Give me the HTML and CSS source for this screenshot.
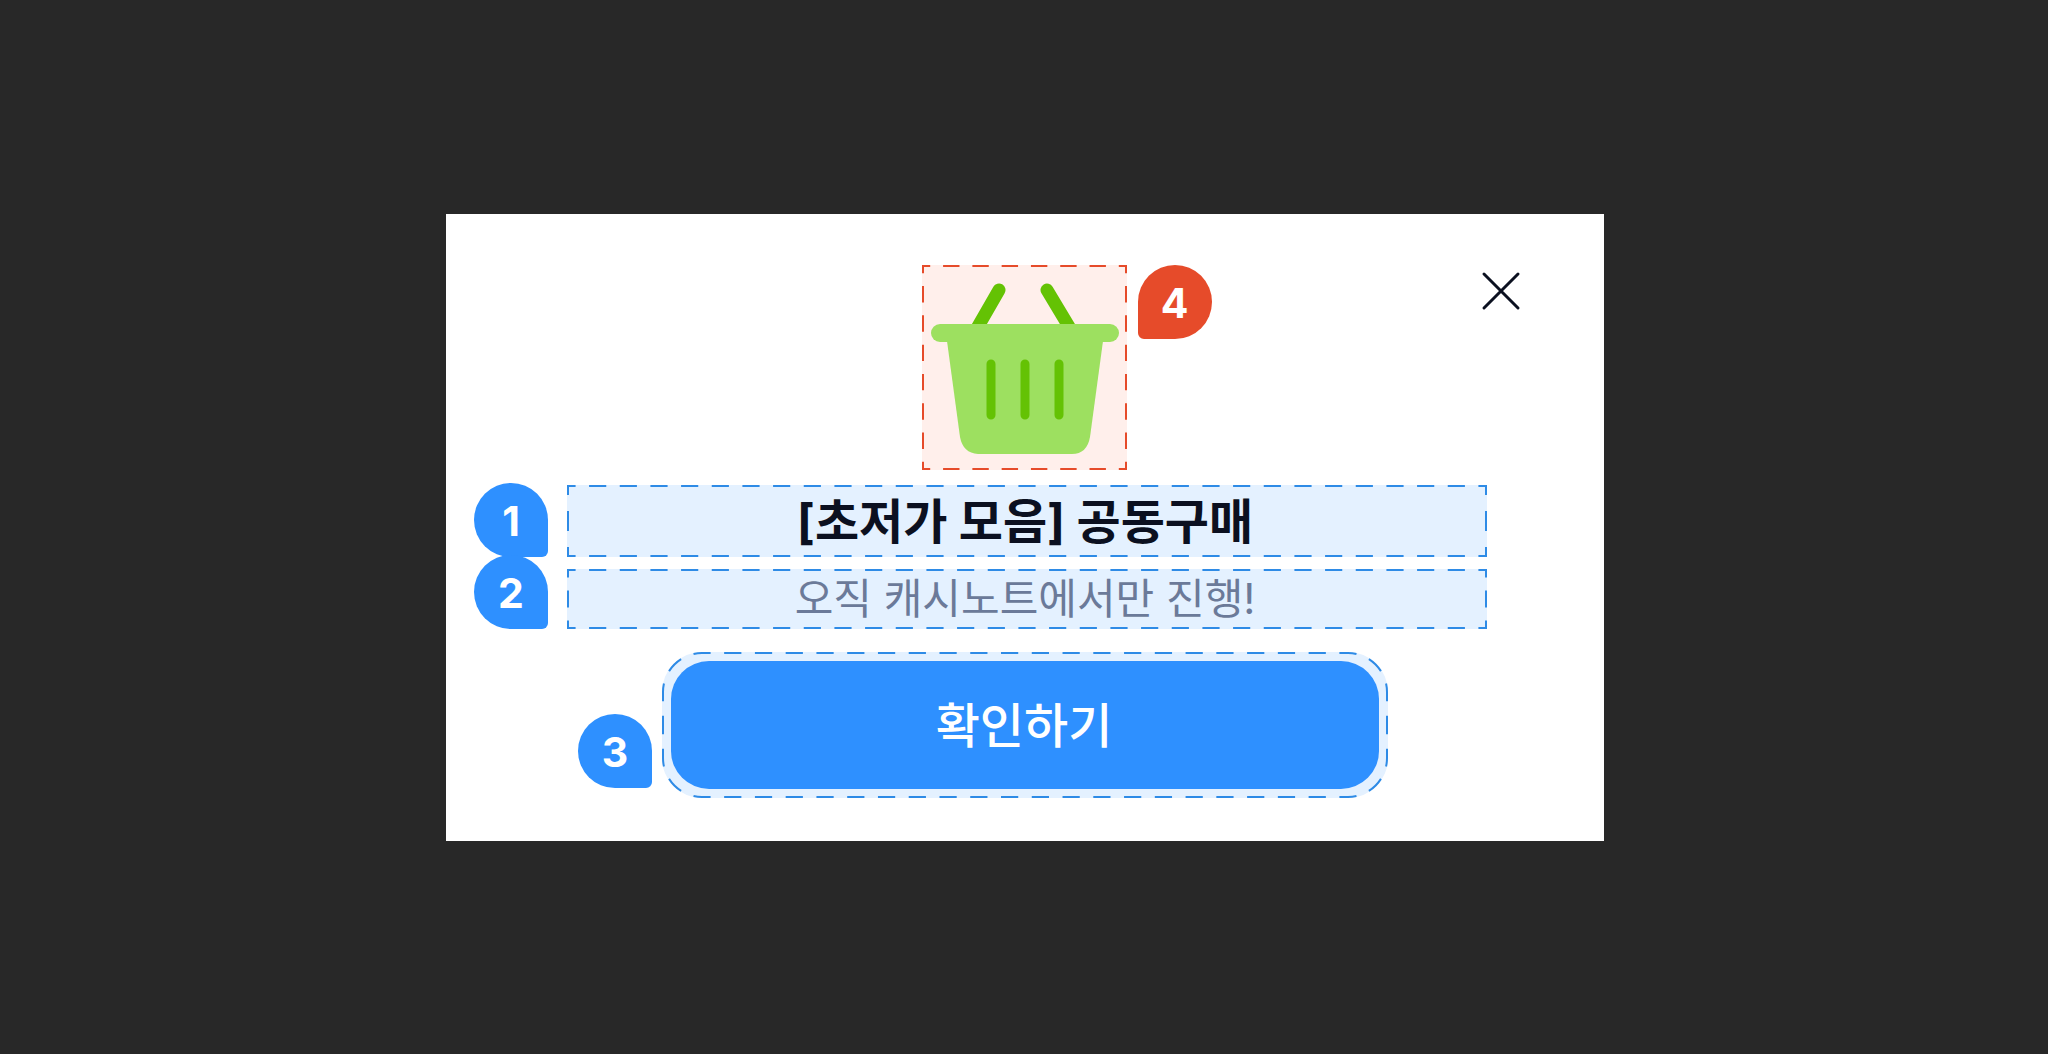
FILE: index.html
```html
<!DOCTYPE html>
<html lang="ko">
<head>
    <meta charset="UTF-8">
    <meta name="viewport" content="width=device-width, initial-scale=1.0">
    <title>[초저가 모음] 공동구매</title>
    <link rel="stylesheet" href="styles.css">
</head>
<body>

    <main class="card">
        <button type="button" class="close" aria-label="닫기">
            <svg viewBox="0 0 48 48" aria-hidden="true">
                <path d="M7 7L41 41M41 7L7 41"/>
            </svg>
        </button>

        <div class="area icon-area">
            <svg class="basket" viewBox="0 0 205 205" aria-hidden="true">
                <path class="handle" d="M77 25L54 65M125 25L149 65"/>
                <rect class="body" x="9" y="59" width="188" height="18" rx="9"/>
                <path class="body" d="M25 76H181L168 172Q165 189 150 189H56Q41 188 38 172Z"/>
                <path class="slat" d="M69 99V150M103 99V150M137 99V150"/>
            </svg>
            <svg class="dashes" aria-hidden="true">
                <line x1="0" y1="1" x2="100%" y2="1" pathLength="700"/>
                <line x1="0" y1="204" x2="100%" y2="204" pathLength="700"/>
                <line x1="1" y1="0" x2="1" y2="100%" pathLength="700"/>
                <line x1="204" y1="0" x2="204" y2="100%" pathLength="700"/>
            </svg>
            <span class="badge badge-red">4</span>
        </div>

        <div class="area title-area">
            <svg class="dashes" aria-hidden="true">
                <line x1="0" y1="1" x2="100%" y2="1" pathLength="3000"/>
                <line x1="0" y1="71" x2="100%" y2="71" pathLength="3000"/>
                <line class="edge" x1="0" y1="0" x2="0" y2="100%" pathLength="200"/>
                <line class="edge" x1="100%" y1="0" x2="100%" y2="100%" pathLength="200"/>
            </svg>
            <h1>[초저가 모음] 공동구매</h1>
            <span class="badge">1</span>
        </div>

        <div class="area sub-area">
            <svg class="dashes" aria-hidden="true">
                <line x1="0" y1="1" x2="100%" y2="1" pathLength="3000"/>
                <line x1="0" y1="59" x2="100%" y2="59" pathLength="3000"/>
                <line class="edge" x1="0" y1="0" x2="0" y2="100%" pathLength="200"/>
                <line class="edge" x1="100%" y1="0" x2="100%" y2="100%" pathLength="200"/>
            </svg>
            <p>오직 캐시노트에서만 진행!</p>
            <span class="badge">2</span>
        </div>

        <div class="area button-area">
            <svg class="dashes" viewBox="0 0 726 146" preserveAspectRatio="none" aria-hidden="true">
                <path d="M40 1H686" pathLength="2100"/>
                <path d="M40 145H686" pathLength="2100"/>
                <path d="M1 40V106" pathLength="200"/>
                <path d="M725 40V106" pathLength="200"/>
                <path d="M1 40A39 39 0 0 1 40 1" pathLength="200"/>
                <path d="M686 1A39 39 0 0 1 725 40" pathLength="200"/>
                <path d="M725 106A39 39 0 0 1 686 145" pathLength="200"/>
                <path d="M40 145A39 39 0 0 1 1 106" pathLength="200"/>
            </svg>
            <button type="button" class="confirm">확인하기</button>
            <span class="badge">3</span>
        </div>
    </main>

</body>
</html>
```
FILE: styles.css
```css
* {
    box-sizing: border-box;
}

body {
    margin: 0;
    padding: 1px 0 0 2px;
    min-height: 100vh;
    display: flex;
    justify-content: center;
    align-items: center;
    background: #282828;
    font-family: Inter, "Noto Sans CJK KR", sans-serif;
}

.card {
    position: relative;
    width: 100%;
    max-width: 1158px;
    padding: 51px 117px 43px 121px;
    background: #fff;
    display: flex;
    flex-direction: column;
    align-items: center;
}

.close {
    position: absolute;
    top: 53px;
    right: 79px;
    width: 48px;
    height: 48px;
    padding: 0;
    border: none;
    background: none;
    cursor: pointer;
}

.close svg {
    display: block;
    fill: none;
    stroke: #0b1020;
    stroke-width: 3;
    stroke-linecap: round;
}

/* Highlighted areas */
.area {
    position: relative;
    background: #e4f1ff;
}

.dashes {
    position: absolute;
    inset: 0;
    width: 100%;
    height: 100%;
    fill: none;
    stroke: #2e8be6;
    stroke-width: 2;
    stroke-dasharray: 56 44;
    stroke-dashoffset: 28;
}

.dashes .edge {
    stroke-width: 4;
}

.icon-area {
    width: 205px;
    height: 205px;
    margin-right: 6px;
    margin-bottom: 15px;
    background: #ffefeb;
}

.icon-area .dashes {
    stroke: #e64b2a;
}

.basket {
    display: block;
    width: 100%;
    height: 100%;
    fill: none;
    stroke: #64c204;
    stroke-linecap: round;
}

.basket .handle {
    stroke-width: 13;
}

.basket .body {
    fill: #9de060;
    stroke: none;
}

.basket .slat {
    stroke-width: 9;
}

.title-area,
.sub-area {
    width: 100%;
    padding-right: 4px;
    text-align: center;
}

.title-area {
    height: 72px;
    margin-bottom: 12px;
}

.sub-area {
    height: 60px;
    margin-bottom: 23px;
}

h1 {
    margin: 0;
    font-size: 48px;
    font-weight: 700;
    line-height: 74px;
    color: #0b1020;
}

p {
    margin: 0;
    font-size: 42px;
    line-height: 60px;
    color: #6b7a99;
}

.button-area {
    width: 100%;
    max-width: 726px;
    margin-right: 4px;
    padding: 9px;
    border-radius: 40px;
}

.confirm {
    position: relative;
    display: block;
    width: 100%;
    height: 128px;
    padding: 0 2px 6px 0;
    border: none;
    border-radius: 38px;
    background: #2e90ff;
    color: #fff;
    font-family: inherit;
    font-size: 48px;
    font-weight: 500;
    cursor: pointer;
}

/* Numbered markers */
.badge {
    position: absolute;
    right: 100%;
    bottom: 0;
    width: 74px;
    height: 74px;
    margin-right: 19px;
    border-radius: 37px 37px 6px 37px;
    background: #2e90ff;
    color: #fff;
    font-size: 41px;
    font-weight: 700;
    line-height: 76px;
    text-align: center;
}

.button-area .badge {
    bottom: 10px;
    margin-right: 10px;
}

.badge-red {
    top: 0;
    right: auto;
    left: 100%;
    margin: 0 0 0 11px;
    border-radius: 37px 37px 37px 6px;
    background: #e64b2a;
}
```
